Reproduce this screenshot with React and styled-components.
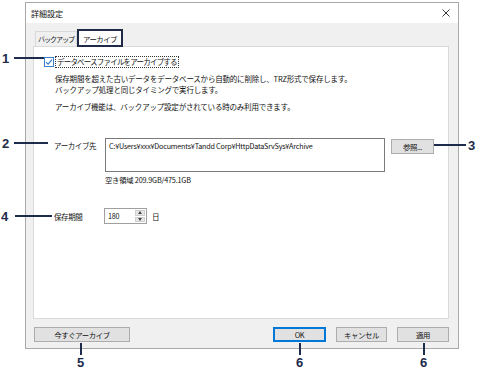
import React from "react";
import styled, { createGlobalStyle } from "styled-components";

const Global = createGlobalStyle`
  html, body { margin: 0; padding: 0; background: #ffffff; }
  body { font-family: "Noto Sans CJK JP", "Noto Sans", sans-serif; color: #111; }
  * { box-sizing: border-box; }
`;

const Page = styled.div`
  position: relative;
  width: 480px;
  height: 374px;
  padding: 2px 0 0 25px;
  overflow: hidden;
`;

const Dialog = styled.div`
  width: 434px;
  height: 347px;
  border: 1px solid #a9a9a9;
  background: #f0f0f0;
  display: flex;
  flex-direction: column;
`;

const TitleBar = styled.div`
  height: 20px;
  background: #ffffff;
  display: flex;
  align-items: center;
  justify-content: space-between;
  padding: 0 6px 0 5px;
  font-size: 8px;
  color: #111;
`;

const CloseX = styled.svg`
  width: 8px;
  height: 8px;
  margin-right: 2px;
`;

const Body = styled.div`
  flex: 1;
  display: flex;
  flex-direction: column;
  padding: 5px 9px 0 7px;
`;

const Tabs = styled.div`
  display: flex;
  align-items: flex-end;
  height: 18px;
  padding-left: 2px;
`;

const Tab = styled.div`
  height: ${(p) => (p.$active ? "18px" : "15px")};
  padding: 0 ${(p) => (p.$active ? "4px" : "2px")};
  display: flex;
  align-items: center;
  font-size: ${(p) => (p.$active ? "7.4px" : "7.1px")};
  letter-spacing: ${(p) => (p.$active ? "-0.5px" : "-1.1px")};
  background: ${(p) => (p.$active ? "#ffffff" : "#f0f0f0")};
  border: ${(p) => (p.$active ? "2px solid #1e2a48" : "1px solid #d9d9d9")};
  border-bottom: ${(p) => (p.$active ? "2px solid #1e2a48" : "none")};
  position: relative;
  z-index: ${(p) => (p.$active ? 2 : 1)};
  margin-bottom: ${(p) => (p.$active ? "-1px" : "0")};
`;

const Panel = styled.div`
  height: 273px;
  background: #ffffff;
  border: 1px solid #dadada;
  display: flex;
  flex-direction: column;
  padding: 9px 0 0 10px;
  font-size: 7.5px;
`;

const CheckRow = styled.label`
  display: flex;
  align-items: center;
  gap: 1px;
`;

const Box = styled.span`
  width: 10px;
  height: 10px;
  border: 1px solid #3b7fd0;
  background: #fff;
  display: flex;
  align-items: center;
  justify-content: center;
`;

const FocusLabel = styled.span`
  border: 1px dotted #333;
  padding: 0 1px;
  line-height: 10px;
  letter-spacing: -0.8px;
`;

const Desc = styled.div`
  margin: 5px 0 0 11px;
  line-height: 11px;
  letter-spacing: -0.2px;
`;

const Gap = styled.div`
  height: ${(p) => p.$h}px;
`;

const Form = styled.div`
  display: grid;
  grid-template-columns: 51px auto;
  margin: 26px 0 0 10px;
  align-items: start;
`;

const FieldLabel = styled.div`
  font-size: 7.5px;
  letter-spacing: -0.4px;
  padding-top: ${(p) => p.$pt || 0}px;
`;

const PathRow = styled.div`
  display: flex;
  align-items: flex-start;
  gap: 6px;
`;

const PathBox = styled.div`
  width: 280px;
  height: 34px;
  border: 1px solid #7a7a7a;
  padding: 2px 3px;
  font-size: 7.2px;
  letter-spacing: -0.2px;
  line-height: 10px;
  white-space: nowrap;
`;

const Btn = styled.div`
  width: ${(p) => p.$w}px;
  height: 15px;
  background: #e1e1e1;
  border: 1px solid ${(p) => (p.$focus ? "#0078d7" : "#adadad")};
  box-shadow: ${(p) => (p.$focus ? "inset 0 0 0 1px #0078d7" : "none")};
  display: flex;
  align-items: center;
  justify-content: center;
  font-size: 7.4px;
  letter-spacing: -0.4px;
  margin-top: ${(p) => p.$mt || 0}px;
`;

const Free = styled.div`
  grid-column: 2;
  margin-top: 3px;
  font-size: 7.3px;
  letter-spacing: -0.2px;
  line-height: 10px;
`;

const Retain = styled.div`
  grid-column: 1 / 3;
  display: grid;
  grid-template-columns: 50px auto;
  align-items: center;
  margin-top: 23px;
`;

const SpinRow = styled.div`
  display: flex;
  align-items: center;
  gap: 5px;
`;

const Spin = styled.div`
  width: 43px;
  height: 16px;
  border: 1px solid #a0a0a0;
  display: flex;
  background: #fff;
`;

const SpinText = styled.div`
  flex: 1;
  padding: 0 3px;
  font-size: 7.2px;
  letter-spacing: -0.3px;
  display: flex;
  align-items: center;
`;

const SpinBtns = styled.div`
  width: 11px;
  display: flex;
  flex-direction: column;
  gap: 1px;
  padding: 1px 1px 1px 0;
`;

const SpinBtn = styled.div`
  flex: 1;
  background: #e6e6e6;
  border: 1px solid #cfcfcf;
  display: flex;
  align-items: center;
  justify-content: center;
`;

const Footer = styled.div`
  display: flex;
  align-items: center;
  padding: 8px 0 0 1px;
  gap: 10px;
`;

const Spacer = styled.div`
  flex: 1;
`;

/* annotation callouts drawn over the picture */
const Callout = styled.div`
  position: absolute;
  background: #1d2b4c;
`;

const Num = styled.div`
  position: absolute;
  font-family: "Liberation Sans", Arial, sans-serif;
  font-weight: 700;
  font-size: 13px;
  line-height: 13px;
  color: #1d2b4c;
`;

const HLine = ({ x1, x2, y }) => (
  <Callout style={{ left: x1, top: y - 1, width: x2 - x1, height: 2 }} />
);
const VLine = ({ x, y1, y2 }) => (
  <Callout style={{ left: x - 1, top: y1, width: 2, height: y2 - y1 }} />
);

export default function App() {
  return (
    <>
      <Global />
      <Page>
        <Dialog>
          <TitleBar>
            <span>詳細設定</span>
            <CloseX viewBox="0 0 8 8">
              <path d="M0.5 0.5 L7.5 7.5 M7.5 0.5 L0.5 7.5" stroke="#222" strokeWidth="0.9" fill="none" />
            </CloseX>
          </TitleBar>
          <Body>
            <Tabs>
              <Tab>バックアップ</Tab>
              <Tab $active>アーカイブ</Tab>
            </Tabs>
            <Panel>
              <CheckRow>
                <Box>
                  <svg width="8" height="8" viewBox="0 0 8 8">
                    <path d="M1 4.2 L3.1 6.2 L7 1.6" stroke="#2a78cf" strokeWidth="1.1" fill="none" />
                  </svg>
                </Box>
                <FocusLabel>データベースファイルをアーカイブする</FocusLabel>
              </CheckRow>
              <Desc>
                保存期間を超えた古いデータをデータベースから自動的に削除し、TRZ形式で保存します。
                <br />
                バックアップ処理と同じタイミングで実行します。
                <Gap $h={6} />
                アーカイブ機能は、バックアップ設定がされている時のみ利用できます。
              </Desc>
              <Form>
                <FieldLabel $pt={2}>アーカイブ先</FieldLabel>
                <PathRow>
                  <PathBox>C:¥Users¥xxx¥Documents¥Tandd Corp¥HttpDataSrvSys¥Archive</PathBox>
                  <Btn $w={43} $mt={1}>参照...</Btn>
                </PathRow>
                <Free>空き領域 209.9GB/475.1GB</Free>
                <Retain>
                  <FieldLabel>保存期間</FieldLabel>
                  <SpinRow>
                    <Spin>
                      <SpinText>180</SpinText>
                      <SpinBtns>
                        <SpinBtn>
                          <svg width="4" height="3" viewBox="0 0 4 3"><path d="M0 3 L2 0 L4 3Z" fill="#444" /></svg>
                        </SpinBtn>
                        <SpinBtn>
                          <svg width="4" height="3" viewBox="0 0 4 3"><path d="M0 0 L2 3 L4 0Z" fill="#444" /></svg>
                        </SpinBtn>
                      </SpinBtns>
                    </Spin>
                    <FieldLabel>日</FieldLabel>
                  </SpinRow>
                </Retain>
              </Form>
            </Panel>
            <Footer>
              <Btn $w={96}>今すぐアーカイブ</Btn>
              <Spacer />
              <Btn $w={53} $focus>OK</Btn>
              <Btn $w={51}>キャンセル</Btn>
              <Btn $w={52}>適用</Btn>
            </Footer>
          </Body>
        </Dialog>

        <Num style={{ left: 2, top: 52 }}>1</Num>
        <HLine x1={14} x2={44} y={58} />
        <Num style={{ left: 2, top: 137 }}>2</Num>
        <HLine x1={14} x2={48} y={143} />
        <HLine x1={434} x2={466} y={145} />
        <Num style={{ left: 468, top: 139 }}>3</Num>
        <Num style={{ left: 1, top: 210 }}>4</Num>
        <HLine x1={15} x2={52} y={216} />
        <VLine x={81} y1={343} y2={355} />
        <Num style={{ left: 77, top: 356 }}>5</Num>
        <VLine x={300} y1={343} y2={355} />
        <Num style={{ left: 296, top: 356 }}>6</Num>
        <VLine x={424} y1={343} y2={355} />
        <Num style={{ left: 420, top: 356 }}>6</Num>
      </Page>
    </>
  );
}
